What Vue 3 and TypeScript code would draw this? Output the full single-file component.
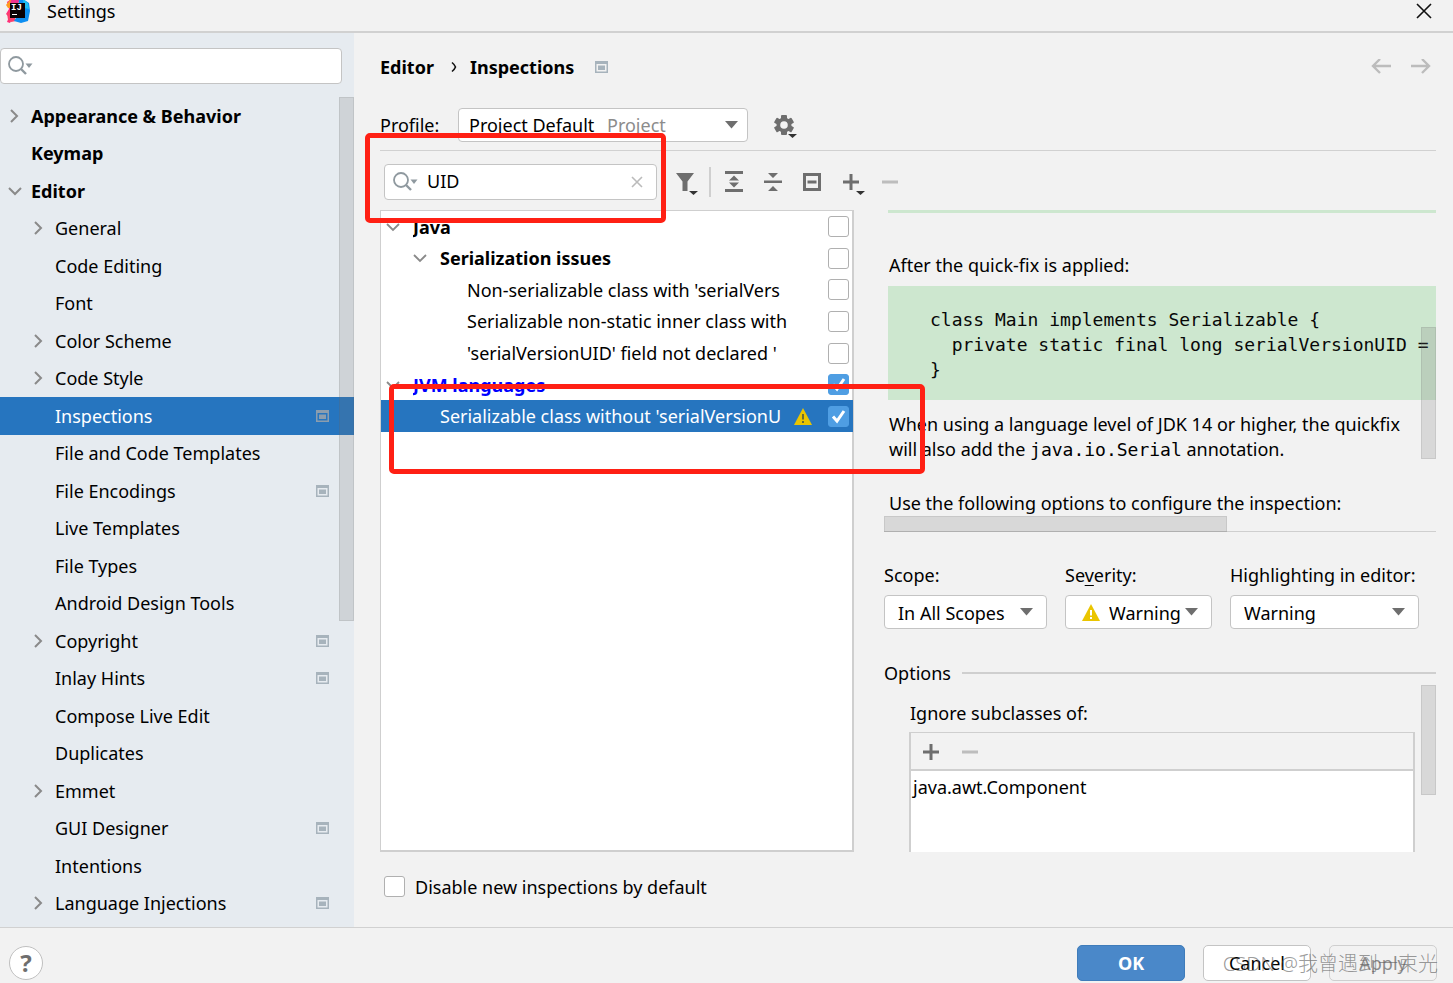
<script setup lang="ts">
import { ref } from 'vue'

interface NavItem {
  label: string
  level: 0 | 1
  arrow?: 'right' | 'down'
  project?: boolean
  selected?: boolean
}

interface InspectionRow {
  label: string
  depth: 0 | 1 | 2
  group?: boolean
  checked: boolean
  modified?: boolean
  selected?: boolean
}

const nav: NavItem[] = [
  { label: 'Appearance & Behavior', level: 0, arrow: 'right' },
  { label: 'Keymap', level: 0 },
  { label: 'Editor', level: 0, arrow: 'down' },
  { label: 'General', level: 1, arrow: 'right' },
  { label: 'Code Editing', level: 1 },
  { label: 'Font', level: 1 },
  { label: 'Color Scheme', level: 1, arrow: 'right' },
  { label: 'Code Style', level: 1, arrow: 'right' },
  { label: 'Inspections', level: 1, project: true, selected: true },
  { label: 'File and Code Templates', level: 1 },
  { label: 'File Encodings', level: 1, project: true },
  { label: 'Live Templates', level: 1 },
  { label: 'File Types', level: 1 },
  { label: 'Android Design Tools', level: 1 },
  { label: 'Copyright', level: 1, arrow: 'right', project: true },
  { label: 'Inlay Hints', level: 1, project: true },
  { label: 'Compose Live Edit', level: 1 },
  { label: 'Duplicates', level: 1 },
  { label: 'Emmet', level: 1, arrow: 'right' },
  { label: 'GUI Designer', level: 1, project: true },
  { label: 'Intentions', level: 1 },
  { label: 'Language Injections', level: 1, arrow: 'right', project: true },
]

const rows = ref<InspectionRow[]>([
  { label: 'Java', depth: 0, group: true, checked: false },
  { label: 'Serialization issues', depth: 1, group: true, checked: false },
  { label: "Non-serializable class with 'serialVers", depth: 2, checked: false },
  { label: 'Serializable non-static inner class with', depth: 2, checked: false },
  { label: "'serialVersionUID' field not declared '", depth: 2, checked: false },
  { label: 'JVM languages', depth: 0, group: true, checked: true, modified: true },
  { label: "Serializable class without 'serialVersionU", depth: 1, checked: true, selected: true },
])

const navQuery = ref('')
const query = ref('UID')
const disableNew = ref(false)
const code = `class Main implements Serializable {
  private static final long serialVersionUID =
}`
</script>

<template>
  <div class="window">
    <header class="titlebar">
      <svg class="logo" width="24" height="24" viewBox="0 0 24 24" aria-hidden="true">
        <path d="M1 3 5 0h8l-3 12-6 12-3-1 2-5-3-3 3-5z" fill="#ff2d7a" />
        <path d="M0 6 4 1h6v8H2z" fill="#ff9a1f" />
        <path d="M5 0h9l-2 5H4z" fill="#f0318f" />
        <path d="M1 14l6-2 3 10-5 1-3-2z" fill="#fb3f6c" />
        <path d="M13 0h4l6 4 1 8-2 10-7 2-7-2 4-6z" fill="#0d8ff2" />
        <path d="M17 0l5 4 1 6-5-1z" fill="#1fc0f0" />
        <rect x="4" y="4" width="15" height="15" fill="#0b0306" />
        <text x="5" y="11" class="logo-text">IJ</text>
        <rect x="6" y="15" width="5" height="1" fill="#fff" />
      </svg>
      <h1 class="title">Settings</h1>
      <button class="plain close" type="button" aria-label="Close">
        <svg width="16" height="16" viewBox="0 0 16 16"><path d="M1 1l14 14M15 1L1 15" stroke="#111" stroke-width="1.6" fill="none" /></svg>
      </button>
    </header>

    <div class="body">
      <aside class="sidebar">
        <label class="search nav-search">
          <svg width="26" height="20" viewBox="0 0 26 20" aria-hidden="true">
            <circle cx="8" cy="8" r="7" fill="none" stroke="#8f999f" stroke-width="1.8" />
            <path d="M13 13l5 5" stroke="#8f999f" stroke-width="2.4" />
            <path d="M17.500 7.500h7l-3.500 4.500z" fill="#8f999f" />
          </svg>
          <input v-model="navQuery" type="text" aria-label="Search settings" />
        </label>
        <nav class="nav">
          <a
            v-for="item in nav"
            :key="item.label"
            href="#"
            class="nav-item"
            :class="{ top: item.level === 0, selected: item.selected }"
            @click.prevent
          >
            <span class="nav-arrow">
              <svg v-if="item.arrow === 'right'" width="14" height="14" viewBox="0 0 14 14"><path d="M3 1l6 6-6 6" fill="none" stroke="#8a8a8a" stroke-width="2" /></svg>
              <svg v-else-if="item.arrow === 'down'" width="14" height="14" viewBox="0 0 14 14"><path d="M1 4l6 6 6-6" fill="none" stroke="#8a8a8a" stroke-width="2" /></svg>
            </span>
            <span class="nav-label">{{ item.label }}</span>
            <svg v-if="item.project" class="project-icon" width="13" height="12" viewBox="0 0 13 12">
              <path fill-rule="evenodd" d="M0 0h13v12H0zM1.500 3v7.500h10V3z" />
              <rect x="3" y="4.500" width="7" height="4.500" />
            </svg>
          </a>
          <div class="thumb nav-thumb"></div>
        </nav>
      </aside>

      <main class="content">
        <div class="crumbs">
          <span class="crumb">Editor</span>
          <svg class="crumb-sep" width="8" height="12" viewBox="0 0 8 12"><path d="M2 1.500Q4.500 3.500 5.500 6 4.500 8.500 2 10.500" fill="none" stroke="#111" stroke-width="1.600" /></svg>
          <span class="crumb">Inspections</span>
          <svg class="project-icon crumb-icon" width="13" height="12" viewBox="0 0 13 12">
            <path fill-rule="evenodd" d="M0 0h13v12H0zM1.500 3v7.500h10V3z" />
            <rect x="3" y="4.500" width="7" height="4.500" />
          </svg>
          <button class="plain back" type="button" aria-label="Back">
            <svg width="20" height="16" viewBox="0 0 20 16"><path d="M20 7H2M9 0L2 7l7 7" fill="none" stroke="#bcbcbc" stroke-width="2.4" /></svg>
          </button>
          <button class="plain" type="button" aria-label="Forward">
            <svg width="20" height="16" viewBox="0 0 20 16"><path d="M0 7h18M11 0l7 7-7 7" fill="none" stroke="#bcbcbc" stroke-width="2.4" /></svg>
          </button>
        </div>

        <div class="profile">
          <label for="profile">Profile:</label>
          <div class="combo profile-combo">
            <select id="profile"><option>Project Default</option></select>
            <span class="hint">Project</span>
            <svg class="tri" width="13" height="8" viewBox="0 0 13 8"><path d="M0 0h13L6.500 7.500z" /></svg>
          </div>
          <button class="plain gear" type="button" aria-label="Profile actions">
            <svg width="24" height="26" viewBox="0 0 24 26">
              <g fill="#6e6e6e" transform="translate(10 13)">
                <rect x="-3" y="-10" width="6" height="20" rx="1" />
                <rect x="-3" y="-10" width="6" height="20" rx="1" transform="rotate(60)" />
                <rect x="-3" y="-10" width="6" height="20" rx="1" transform="rotate(120)" />
                <circle r="7.500" />
                <circle r="3.800" fill="#f2f2f2" />
              </g>
              <path d="M14 22h9l-4.500 4z" fill="#333" />
            </svg>
          </button>
        </div>

        <div class="toolbar">
          <label class="search filter-search">
            <svg width="26" height="20" viewBox="0 0 26 20" aria-hidden="true">
              <circle cx="8" cy="8" r="7" fill="none" stroke="#8f999f" stroke-width="1.8" />
              <path d="M13 13l5 5" stroke="#8f999f" stroke-width="2.4" />
              <path d="M17.500 7.500h7l-3.500 4.500z" fill="#8f999f" />
            </svg>
            <input v-model="query" type="text" aria-label="Filter inspections" />
            <button class="plain" type="button" aria-label="Clear" @click="query = ''">
              <svg width="12" height="12" viewBox="0 0 12 12"><path d="M1 1l10 10M11 1L1 11" stroke="#bbb" stroke-width="1.600" /></svg>
            </button>
          </label>
          <button class="plain tool filter" type="button" aria-label="Filter">
            <svg width="24" height="26" viewBox="0 0 24 26"><path d="M2 4h18l-6.500 8.500V22h-5v-9.500z" fill="#6e6e6e" /><path d="M15 22h9l-4.500 4z" fill="#333" /></svg>
          </button>
          <span class="sep"></span>
          <button class="plain tool" type="button" aria-label="Expand all">
            <svg width="24" height="26" viewBox="0 0 24 26" fill="#6e6e6e"><path d="M3 2h18v3H3zM3 20h18v3H3zM7 11.500h10L12 6.500zM7 13.500h10l-5 5z" /></svg>
          </button>
          <button class="plain tool" type="button" aria-label="Collapse all">
            <svg width="24" height="26" viewBox="0 0 24 26" fill="#6e6e6e"><path d="M3 11.500h18v2.500H3zM7 4h10l-5 5zM7 22h10l-5-5z" /></svg>
          </button>
          <button class="plain tool" type="button" aria-label="Reset to empty">
            <svg width="24" height="26" viewBox="0 0 24 26"><path d="M4.500 5.500h15v15h-15z" fill="none" stroke="#6e6e6e" stroke-width="3" /><path d="M7.500 11.500h9v3h-9z" fill="#6e6e6e" /></svg>
          </button>
          <button class="plain tool" type="button" aria-label="Add">
            <svg width="26" height="26" viewBox="0 0 26 26"><path d="M12 5v16M4 13h16" stroke="#6e6e6e" stroke-width="3" /><path d="M17 22h9l-4.500 4z" fill="#333" /></svg>
          </button>
          <button class="plain tool" type="button" aria-label="Remove" disabled>
            <svg width="24" height="26" viewBox="0 0 24 26"><path d="M4 13h16" stroke="#bdbdbd" stroke-width="3" /></svg>
          </button>
        </div>

        <div class="split">
          <section class="tree">
            <div class="tree-rows">
              <label
                v-for="row in rows"
                :key="row.label"
                class="tree-row"
                :class="['depth-' + row.depth, { group: row.group, modified: row.modified, selected: row.selected }]"
              >
                <svg v-if="row.group" class="tree-arrow" width="14" height="14" viewBox="0 0 14 14"><path d="M1 4l6 6 6-6" fill="none" stroke="#8a8a8a" stroke-width="1.800" /></svg>
                <span class="tree-label">{{ row.label }}</span>
                <svg v-if="row.selected" class="warn" width="18" height="17" viewBox="0 0 18 17"><path d="M9 0l9 17H0z" fill="#eac500" /><path d="M8 6h2v5.500H8zM8 13h2v2H8z" fill="#6b6d35" /></svg>
                <input v-model="row.checked" type="checkbox" class="check" />
              </label>
            </div>
          </section>

          <section class="details">
            <div class="doc">
              <div class="code-end"></div>
              <p class="after">After the quick-fix is applied:</p>
              <pre class="code">{{ code }}</pre>
              <p class="jdk">When using a language level of JDK 14 or higher, the quickfix<br />will also add the <code>java.io.Serial</code> annotation.</p>
              <p class="use">Use the following options to configure the inspection:</p>
              <div class="thumb doc-v"></div>
              <div class="thumb doc-h"></div>
            </div>

            <div class="fields">
              <div class="field">
                <label for="scope">Scope:</label>
                <div class="combo">
                  <select id="scope"><option>In All Scopes</option></select>
                  <svg class="tri" width="13" height="8" viewBox="0 0 13 8"><path d="M0 0h13L6.500 7.500z" /></svg>
                </div>
              </div>
              <div class="field">
                <label for="severity">Se<u>v</u>erity:</label>
                <div class="combo severity">
                  <svg class="warn" width="18" height="17" viewBox="0 0 18 17"><path d="M9 0l9 17H0z" fill="#eac500" /><path d="M8 6h2v5.500H8zM8 13h2v2H8z" fill="#fff" /></svg>
                  <select id="severity"><option>Warning</option></select>
                  <svg class="tri" width="13" height="8" viewBox="0 0 13 8"><path d="M0 0h13L6.500 7.500z" /></svg>
                </div>
              </div>
              <div class="field">
                <label for="highlight">Highlighting in editor:</label>
                <div class="combo">
                  <select id="highlight"><option>Warning</option></select>
                  <svg class="tri" width="13" height="8" viewBox="0 0 13 8"><path d="M0 0h13L6.500 7.500z" /></svg>
                </div>
              </div>
            </div>

            <h2 class="options-title">Options</h2>
            <div class="options">
              <h3 class="ignore">Ignore subclasses of:</h3>
              <div class="panel">
                <div class="panel-bar">
                  <button class="plain" type="button" aria-label="Add class">
                    <svg width="16" height="16" viewBox="0 0 16 16"><path d="M8 0v16M0 8h16" stroke="#6e6e6e" stroke-width="3" /></svg>
                  </button>
                  <button class="plain" type="button" aria-label="Remove class" disabled>
                    <svg width="16" height="16" viewBox="0 0 16 16"><path d="M0 8h16" stroke="#bdbdbd" stroke-width="3" /></svg>
                  </button>
                </div>
                <ul class="panel-list">
                  <li>java.awt.Component</li>
                </ul>
              </div>
              <div class="thumb options-v"></div>
            </div>
          </section>
        </div>

        <label class="disable">
          <input v-model="disableNew" type="checkbox" class="check" />
          <span>Disable new inspections by default</span>
        </label>
      </main>
    </div>

    <footer class="footer">
      <button class="help" type="button" aria-label="Help">?</button>
      <button class="btn primary" type="button">OK</button>
      <button class="btn" type="button">Cancel</button>
      <button class="btn apply" type="button" disabled>Apply</button>
      <span class="watermark">CSDN @我曾遇到一束光</span>
    </footer>

    <div class="mark mark-search"></div>
    <div class="mark mark-row"></div>
  </div>
</template>

<style>
body {
  margin: 0;
  background: #f2f2f2;
}
</style>

<style scoped>
.window {
  position: relative;
  display: flex;
  flex-direction: column;
  min-height: 100vh;
  overflow: hidden;
  background: #f2f2f2;
  color: #000;
  font-family: 'Noto Sans', 'Noto Sans CJK SC', sans-serif;
  font-size: 18px;
  line-height: 24px;
}
.window * {
  box-sizing: border-box;
}
h1, h2, h3, p, pre, ul {
  margin: 0;
  padding: 0;
  font-size: inherit;
  font-weight: 400;
}
svg {
  display: block;
  flex: none;
}
input, select, button {
  font: inherit;
  color: inherit;
}
.plain {
  padding: 0;
  border: 0;
  background: none;
}

.titlebar {
  display: flex;
  height: 33px;
  padding: 0 21px 10px 6px;
  border-bottom: 2px solid #d1d1d1;
  align-items: center;
}
.logo-text {
  font-family: 'Liberation Mono', monospace;
  font-size: 9px;
  font-weight: 700;
  fill: #fff;
}
.title {
  margin-left: 17px;
}
.close {
  margin-left: auto;
}

.body {
  display: grid;
  flex: 1;
  grid-template-columns: 354px minmax(0, 1fr);
}
.sidebar {
  display: flex;
  flex-direction: column;
  padding-top: 15px;
  background: #e6ebf0;
}
.search {
  display: flex;
  align-items: center;
  background: #fff;
  border: 1px solid #c4c4c4;
  border-radius: 4px;
}
.search input {
  flex: 1;
  min-width: 0;
  height: 30px;
  padding: 0 0 2px;
  border: 0;
  outline: 0;
  background: none;
}
.nav-search {
  width: 342px;
  height: 36px;
  padding-left: 7px;
}
.nav {
  position: relative;
  display: grid;
  flex: 1;
  grid-auto-rows: 1fr;
  margin-top: 13px;
  padding-bottom: 5px;
}
.nav-item {
  display: flex;
  align-items: center;
  padding: 0 25px 0 31px;
  color: inherit;
  text-decoration: none;
}
.nav-item.top {
  padding-left: 7px;
  font-weight: 700;
}
.nav-item.selected {
  background: #2675bf;
  color: #fff;
}
.nav-arrow {
  width: 24px;
}
.nav-arrow svg {
  margin-left: 1px;
}
.nav-label {
  flex: 1;
  white-space: nowrap;
}
.project-icon {
  fill: #a7b3bc;
}
.nav-item.selected .project-icon {
  fill: #8b9dae;
}
.thumb {
  position: absolute;
  background: rgba(115, 115, 115, 0.2);
  border: 1px solid rgba(89, 89, 89, 0.12);
}
.nav-thumb {
  top: 0;
  right: 0;
  width: 15px;
  height: 524px;
}

.content {
  display: flex;
  flex-direction: column;
  padding: 0 17px 0 26px;
}
.crumbs {
  display: flex;
  align-items: center;
  height: 68px;
  padding-right: 5px;
}
.crumb {
  font-weight: 700;
}
.crumb-sep {
  margin: 0 12px 0 16px;
}
.crumb-icon {
  margin-left: 21px;
}
.back {
  margin: 0 20px 0 auto;
}
.profile {
  display: flex;
  align-items: center;
  margin-top: 7px;
  padding-bottom: 8px;
  border-bottom: 1px solid #d1d1d1;
}
.profile label {
  width: 78px;
}
.combo {
  display: grid;
  align-items: center;
  height: 34px;
  background: #fff;
  border: 1px solid #c4c4c4;
  border-radius: 4px;
}
.combo > * {
  grid-area: 1 / 1;
}
.combo select {
  width: 100%;
  height: 32px;
  padding: 0 0 0 13px;
  border: 0;
  outline: 0;
  appearance: none;
  background: none;
}
.tri {
  justify-self: end;
  margin-right: 13px;
  fill: #6e6e6e;
  pointer-events: none;
}
.profile-combo {
  width: 290px;
}
.profile-combo select {
  padding-left: 10px;
}
.profile-combo .tri {
  margin-right: 9px;
}
.hint {
  padding-left: 148px;
  color: #8c8c8c;
  pointer-events: none;
}
.gear {
  margin-left: 26px;
}

.toolbar {
  display: flex;
  align-items: center;
  gap: 15px;
  padding: 13px 0 10px 4px;
}
.filter-search {
  width: 273px;
  height: 36px;
  padding: 0 13px 0 8px;
}
.filter-search input {
  margin-left: 8px;
}
.tool {
  width: 24px;
}
.tool svg {
  overflow: visible;
}
.filter {
  margin-left: 2px;
}
.sep {
  width: 2px;
  height: 30px;
  margin: 0 -4px;
  background: #cfcfcf;
}

.split {
  display: grid;
  flex: 1;
  grid-template-columns: 474fr 552fr;
  column-gap: 30px;
}
.tree {
  min-width: 0;
  background: #fff;
  border: 1px solid #cfcfcf;
  border-right-width: 2px;
  border-bottom-width: 2px;
}
.tree-rows {
  display: grid;
  grid-auto-rows: 1fr;
  height: 221px;
}
.tree-row {
  display: flex;
  align-items: center;
  padding-right: 4px;
}
.tree-row.depth-0 {
  padding-left: 5px;
}
.tree-row.depth-1 {
  padding-left: 59px;
}
.tree-row.depth-1.group {
  padding-left: 32px;
}
.tree-row.depth-2 {
  padding-left: 86px;
}
.tree-row.group {
  font-weight: 700;
}
.tree-row.modified {
  color: #00f;
}
.tree-row.selected {
  background: #2675bf;
  color: #fff;
}
.tree-arrow {
  margin-right: 13px;
}
.tree-label {
  flex: 1;
  margin-right: 41px;
  overflow: hidden;
  white-space: nowrap;
}
.tree-row.selected .tree-label {
  margin-right: 7px;
}
.tree-row .warn {
  margin-right: 16px;
}
.check {
  flex: none;
  width: 21px;
  height: 21px;
  margin: 0;
  appearance: none;
  background: #fff;
  border: 1px solid #b0b0b0;
  border-radius: 3px;
}
.check:checked {
  border-color: #4f9ee3;
  background: #4f9ee3 url("data:image/svg+xml,%3Csvg xmlns='http://www.w3.org/2000/svg' viewBox='0 0 19 19'%3E%3Cpath d='M4 9.500l4 4.500 7-10' fill='none' stroke='white' stroke-width='3'/%3E%3C/svg%3E");
}

.details {
  display: flex;
  flex-direction: column;
  min-width: 0;
}
.doc {
  position: relative;
  padding: 0 0 15px 4px;
  border-bottom: 1px solid #cfcfcf;
  line-height: 25px;
}
.code-end {
  height: 3px;
  background: #cde7cf;
}
.doc p {
  padding-left: 1px;
  white-space: nowrap;
}
.doc .after {
  padding-top: 40px;
}
.code {
  height: 114px;
  margin-top: 8px;
  padding: 21px 0 0 42px;
  overflow: hidden;
  background: #cde7cf;
  color: #080808;
}
.code,
code {
  font-family: 'DejaVu Sans Mono', monospace;
}
.doc .jdk {
  margin-top: 12px;
}
.doc .use {
  margin-top: 29px;
}
.doc-v {
  top: 117px;
  right: 0;
  width: 15px;
  height: 132px;
}
.doc-h {
  bottom: -1px;
  left: 0;
  width: 343px;
  height: 16px;
}

.fields {
  display: grid;
  grid-template-columns: 163fr 147fr 189fr;
  gap: 18px;
  margin-top: 31px;
  padding-right: 17px;
}
.field {
  min-width: 0;
  white-space: nowrap;
}
.field .combo {
  margin-top: 8px;
}
.field select {
  padding-top: 1px;
}
.severity select {
  padding-left: 43px;
}
.severity .warn {
  margin-left: 16px;
}
u {
  text-underline-offset: 3px;
}
.options-title {
  display: flex;
  align-items: center;
  gap: 11px;
  margin-top: 32px;
}
.options-title::after {
  flex: 1;
  height: 2px;
  background: #cfcfcf;
  content: '';
}
.options {
  position: relative;
  display: flex;
  flex: 1;
  flex-direction: column;
  padding: 16px 21px 0 25px;
}
.ignore {
  padding-left: 1px;
}
.panel {
  display: flex;
  flex: 1;
  flex-direction: column;
  margin-top: 7px;
  background: #fff;
  border: 2px solid #cfcfcf;
  border-top-width: 1px;
  border-bottom: 0;
}
.panel-bar {
  display: flex;
  align-items: center;
  gap: 23px;
  height: 38px;
  padding: 2px 0 0 12px;
  background: #f2f2f2;
  border-bottom: 2px solid #cfcfcf;
}
.panel-list {
  padding: 4px 2px;
  list-style: none;
}
.options-v {
  top: 0;
  right: 0;
  width: 15px;
  height: 110px;
}
.disable {
  display: flex;
  align-items: center;
  gap: 10px;
  height: 75px;
  padding: 0 0 6px 4px;
}

.footer {
  position: relative;
  display: flex;
  align-items: center;
  gap: 18px;
  height: 56px;
  padding: 15px 16px 0 9px;
  border-top: 1px solid #d1d1d1;
}
.help {
  width: 34px;
  height: 34px;
  margin-right: auto;
  padding: 0;
  background: #fff;
  border: 1px solid #c0c0c0;
  border-radius: 50%;
  color: #6e6e6e;
  font-size: 24px;
  font-weight: 700;
}
.btn {
  width: 108px;
  height: 36px;
  padding: 0;
  background: #fff;
  border: 1px solid #c4c4c4;
  border-radius: 5px;
}
.btn.primary {
  background: #4a88c9;
  border-color: #3f7cba;
  color: #fff;
  font-weight: 700;
}
.btn.apply {
  background: #f2f2f2;
  border-color: #cfcfcf;
  color: #8c8c8c;
}
.watermark {
  position: absolute;
  top: 24px;
  right: 15px;
  color: rgba(90, 90, 90, 0.62);
  font-size: 20px;
  font-weight: 300;
  white-space: nowrap;
  pointer-events: none;
}

.mark {
  position: absolute;
  border: 5px solid #ff2014;
  border-radius: 5px;
  pointer-events: none;
}
.mark-search {
  top: 133px;
  left: 365px;
  width: 301px;
  height: 90px;
}
.mark-row {
  top: 384px;
  left: 389px;
  width: 536px;
  height: 90px;
}
</style>
